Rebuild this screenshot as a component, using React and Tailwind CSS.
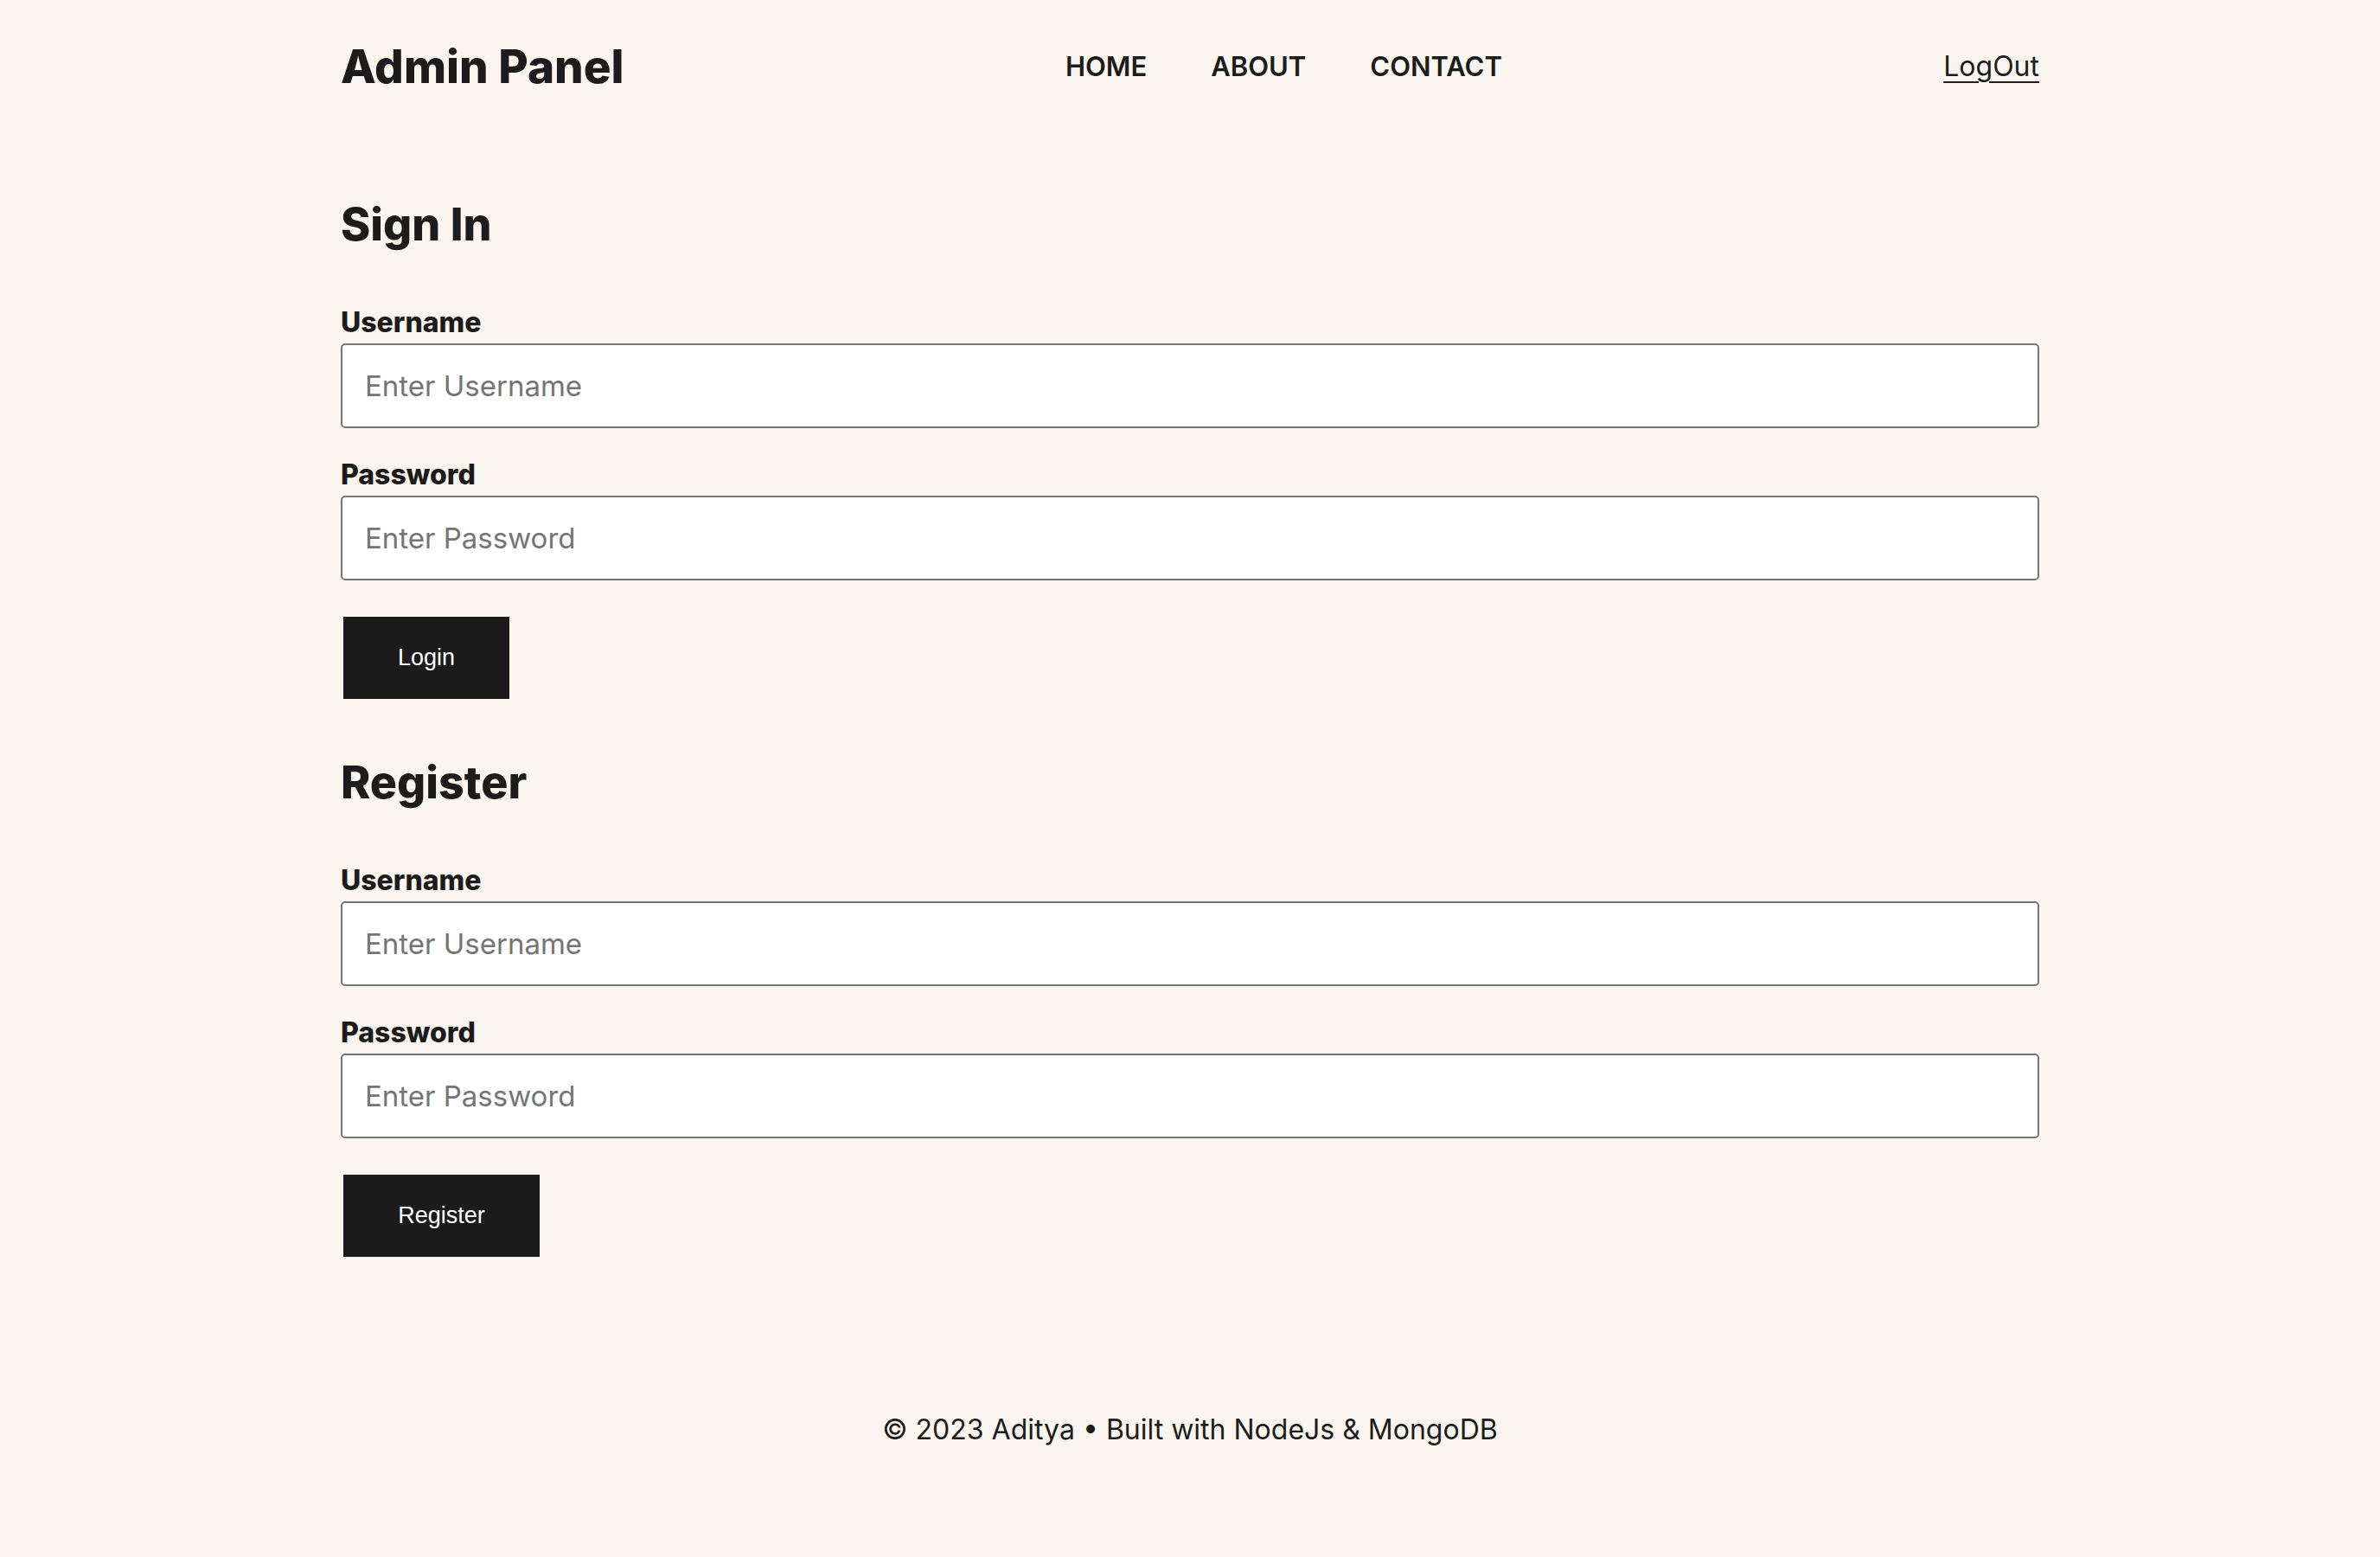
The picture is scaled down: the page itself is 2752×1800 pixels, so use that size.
export default function App() {
  const fields = (prefix) => (
    <>
      <label htmlFor={`${prefix}-username`} className="block h-[40px] leading-[40px] text-[32px] font-extrabold mt-[67px]">
        Username
      </label>
      <input
        id={`${prefix}-username`}
        type="text"
        placeholder="Enter Username"
        className="mt-[4px] block w-full h-[98px] bg-white border-2 border-[#767676] rounded-[5px] px-[26px] text-[33px] placeholder-[#757575] outline-none"
      />
      <label htmlFor={`${prefix}-password`} className="block h-[40px] leading-[40px] text-[32px] font-extrabold mt-[34px]">
        Password
      </label>
      <input
        id={`${prefix}-password`}
        type="password"
        placeholder="Enter Password"
        className="mt-[4px] block w-full h-[98px] bg-white border-2 border-[#767676] rounded-[5px] px-[26px] text-[33px] placeholder-[#757575] outline-none"
      />
    </>
  )

  return (
    <div className="min-h-screen bg-[#faf5ef] text-[#1c1c1c] font-['Inter','Open_Sans',sans-serif]">
      <div className="mx-auto w-[1964px]">
        <header className="flex items-center justify-between h-[154px]">
          <a href="#" className="text-[53px] font-extrabold leading-none">Admin Panel</a>
          <nav className="flex items-center gap-[74px] text-[31px] font-semibold uppercase">
            <a href="#">Home</a>
            <a href="#">About</a>
            <a href="#">Contact</a>
          </nav>
          <a href="#" className="text-[32px] underline underline-offset-[6px] decoration-[2px]">LogOut</a>
        </header>

        <main>
          <form>
            <h2 className="mt-[80px] text-[52px] font-extrabold leading-none">Sign In</h2>
            {fields('login')}
            <button
              type="button"
              className="mt-[42px] ml-[3px] h-[95px] w-[192px] bg-[#1b1b1b] text-white text-[27px] font-['Liberation_Sans',Arial,sans-serif]"
            >
              Login
            </button>
          </form>

          <form>
            <h2 className="mt-[71px] text-[52px] font-extrabold leading-none">Register</h2>
            {fields('register')}
            <button
              type="button"
              className="mt-[42px] ml-[3px] h-[95px] w-[227px] bg-[#1b1b1b] text-white text-[27px] font-['Liberation_Sans',Arial,sans-serif]"
            >
              Register
            </button>
          </form>
        </main>

        <footer className="mt-[180px] h-[40px] leading-[40px] text-center text-[32px]">
          © 2023 Aditya • Built with NodeJs &amp; MongoDB
        </footer>
      </div>
    </div>
  )
}
